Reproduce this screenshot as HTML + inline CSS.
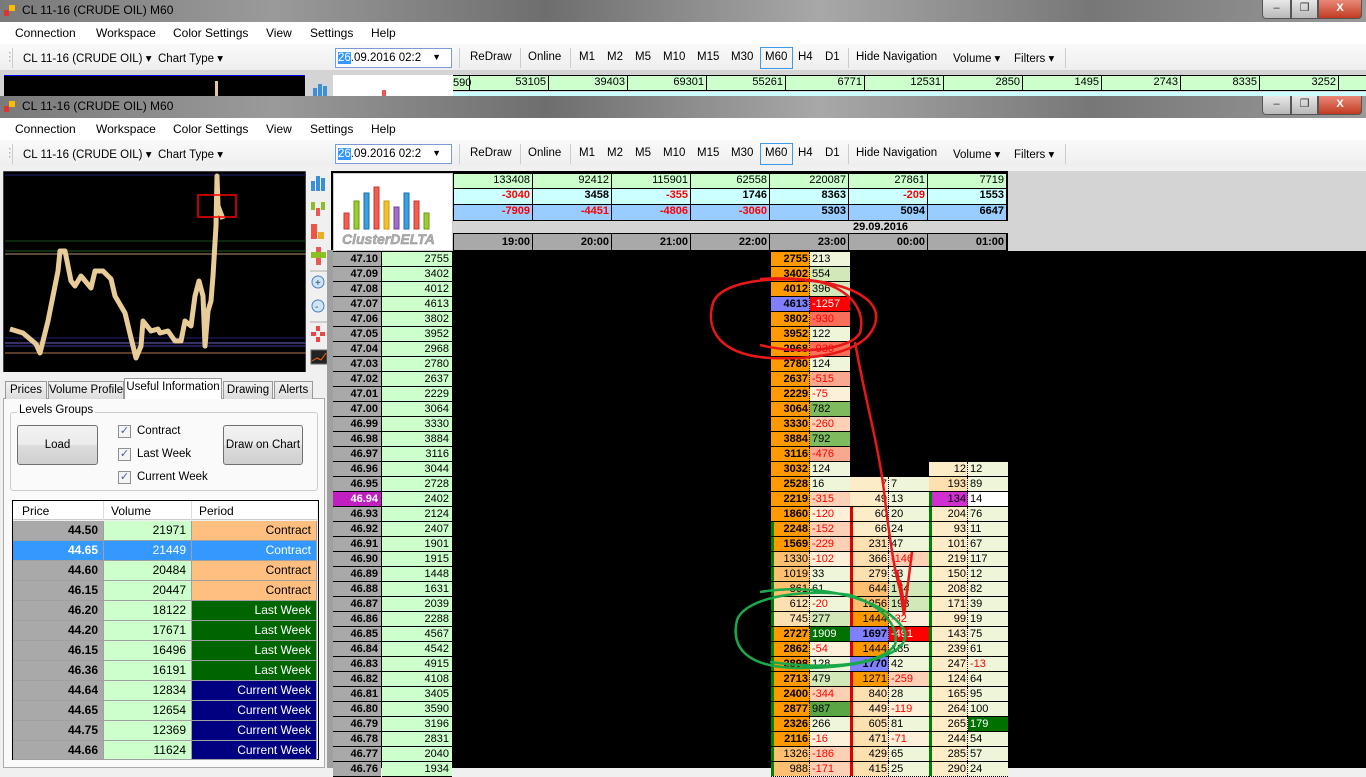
<!DOCTYPE html>
<html><head><meta charset="utf-8"><style>
*{margin:0;padding:0;box-sizing:border-box}
body{width:1366px;height:768px;overflow:hidden;position:relative;background:#f0f0f0;font-family:"Liberation Sans",sans-serif;font-size:12px;color:#000}
.a{position:absolute}
.title{left:0;width:1366px;height:22px;background:linear-gradient(90deg,#7a7a7a,#9a9a9a 20%,#6e6e6e 40%,#a8a8a8 60%,#777 80%,#9a9a9a);color:#000}
.title span{position:absolute;left:22px;top:3px;font-size:12px}
.ticon{position:absolute;left:4px;top:5px;width:12px;height:11px}
.btns{position:absolute;right:4px;top:0;height:19px;display:flex}
.btns div{height:19px;border:1px solid #555;border-top:none;background:linear-gradient(#e8e8e8,#b8b8b8);color:#333;text-align:center;font-size:11px;line-height:17px}
.menu{left:0;width:1366px;height:22px;background:#fff}
.menu span{position:absolute;top:4px;font-size:12px}
.tb{left:0;width:1366px;height:26px;background:linear-gradient(#fafafa,#eeeeee)}
.tb span{position:absolute;top:7px;font-size:11.5px;white-space:nowrap}
.sep{position:absolute;top:4px;width:1px;height:20px;background:#ccc}
.combo{position:absolute;top:4px;left:335px;width:117px;height:20px;border:1px solid #7a9cd3;background:#fff;font-size:11.5px;padding:3px 0 0 2px}
.combo b{background:#3399ff;color:#fff;font-weight:normal}
.m60{position:absolute;top:3px;left:760px;width:33px;height:22px;border:1px solid #3c9ae8}
.col{position:absolute;top:252px}
.col div{height:15px;line-height:14px;font-size:11px;border-bottom:1px solid #000;white-space:nowrap}
.pc div{background:#a9a9a9;font-weight:bold;text-align:right;padding-right:3px;width:48px}
.vc div{background:#ccffcc;text-align:right;padding-right:3px;width:70px}
.cl div{display:flex;border-bottom:1px dotted #000}
.cl i{font-style:normal;display:block;width:39px;text-align:right;padding-right:1px;border-right:1px dotted #000}
.cl u{text-decoration:none;display:block;width:40px;padding-left:2px}
.B{font-weight:bold}
.O{background:#ff9900}.o{background:#fcc070}.p{background:#fde0b0}.q{background:#fdecc8}
.n{color:#f00}
.g1{background:#eef5d8}.g2{background:#d2e8b8}.g3{background:#7dbb5e}.g4{background:#007000;color:#fff}
.r1{background:#fdf0d8}.r2{background:#fcd0b4}.r3{background:#f9a890}.r4{background:#f86e5a}.r5{background:#ff0000;color:#fff}
.bl{background:#8080ff}
.gl{box-shadow:inset 3px 0 0 #008000}.rl{box-shadow:inset 3px 0 0 #e00000}
.hd{position:absolute;left:453px;display:flex}
.hd div{width:79px;text-align:right;padding-right:2px;border-right:1px solid #000;border-bottom:1px solid #000;font-size:11px}
.lt{position:absolute;left:13px;display:flex;height:20px;font-size:12px}
.lt div{line-height:19px;text-align:right;padding-right:5px;border-bottom:1px solid #a0a0a0;border-right:1px solid #a0a0a0}
.lt .p1{width:91px;background:#a9a9a9;font-weight:bold}
.lt .p2{width:88px;background:#ccffcc}
.lt .p3{width:125px}
.tab{position:absolute;top:381px;height:18px;border:1px solid #999;border-bottom:none;background:linear-gradient(#f2f2f2,#dcdcdc);font-size:11.5px;padding-top:2px;text-align:center;white-space:nowrap;overflow:hidden}
.btn{position:absolute;border:1px solid #707070;border-radius:3px;background:linear-gradient(#f2f2f2,#ebebeb 50%,#dddddd 50%,#cfcfcf);text-align:center;font-size:11.5px}
.cb{position:absolute;width:13px;height:13px;border:1px solid #8e8f8f;background:#f4f4f4;font-size:11px;line-height:11px;text-align:center;color:#4a5f97}
</style></head><body>

<!-- Window 1 (behind) -->
<div class="a title" style="top:0"><svg class="ticon" viewBox="0 0 12 11"><rect x="0" y="5" width="5" height="6" fill="#d33"/><rect x="5" y="0" width="6" height="6" fill="#fb0"/></svg><span>CL 11-16 (CRUDE OIL) M60</span>
<div class="btns"><div style="width:29px;border-radius:0 0 0 4px">&#8211;</div><div style="width:27px">&#10064;</div><div style="width:44px;background:linear-gradient(#e88a7a,#c23b22);color:#fff;font-weight:bold;border-radius:0 0 4px 0">X</div></div></div>
<div class="a menu" style="top:22px"><span style="left:15px">Connection</span><span style="left:96px">Workspace</span><span style="left:173px">Color Settings</span><span style="left:266px">View</span><span style="left:310px">Settings</span><span style="left:371px">Help</span></div>
<div class="a tb" style="top:44px">
<span style="left:4px;top:5px;color:#aaa">⋮</span><div class="sep" style="left:12px"></div>
<span style="left:23px">CL 11-16 (CRUDE OIL) ▾</span><span style="left:158px">Chart Type ▾</span>
<div class="combo"><b>26</b>.09.2016 02:2<span style="position:absolute;right:10px;top:3px;font-size:9px">▼</span></div>
<div class="sep" style="left:459px"></div><span style="left:470px">ReDraw</span><div class="sep" style="left:520px"></div><span style="left:528px">Online</span><div class="sep" style="left:570px"></div>
<span style="left:579px">M1</span><span style="left:607px">M2</span><span style="left:635px">M5</span><span style="left:663px">M10</span><span style="left:697px">M15</span><span style="left:731px">M30</span><div class="m60"></div><span style="left:765px">M60</span><span style="left:798px">H4</span><span style="left:825px">D1</span><div class="sep" style="left:848px"></div>
<span style="left:856px">Hide Navigation</span><span style="left:953px">Volume ▾</span><span style="left:1014px">Filters ▾</span><div class="sep" style="left:1065px"></div></div>
<div class="a" style="top:70px;left:0;width:1366px;height:26px;background:#d4d4d4"></div>
<div class="a" style="top:75px;left:4px;width:301px;height:21px;background:#000;border-top:1px solid #00f"></div>
<div class="a" style="top:81px;left:215px;width:3px;height:15px;background:#e8c890"></div>
<div class="a" style="top:75px;left:333px;width:120px;height:21px;background:#fff"></div>
<div class="a" style="top:90px;left:382px;width:4px;height:6px;background:#e55"></div>
<div class="a" style="top:75px;left:453px;width:913px;height:16px;background:#ccffcc;border-top:1px solid #000;border-bottom:1px solid #000;font-size:11px">
<div style="position:absolute;left:0;top:1px;width:16px;text-align:right">590</div>
<div style="position:absolute;left:16px;top:0;display:flex">
<div style="width:79px;border-left:1px solid #000;text-align:right;padding-right:2px;height:14px">53105</div><div style="width:79px;border-left:1px solid #000;text-align:right;padding-right:2px;height:14px">39403</div><div style="width:79px;border-left:1px solid #000;text-align:right;padding-right:2px;height:14px">69301</div><div style="width:79px;border-left:1px solid #000;text-align:right;padding-right:2px;height:14px">55261</div><div style="width:79px;border-left:1px solid #000;text-align:right;padding-right:2px;height:14px">6771</div><div style="width:79px;border-left:1px solid #000;text-align:right;padding-right:2px;height:14px">12531</div><div style="width:79px;border-left:1px solid #000;text-align:right;padding-right:2px;height:14px">2850</div><div style="width:79px;border-left:1px solid #000;text-align:right;padding-right:2px;height:14px">1495</div><div style="width:79px;border-left:1px solid #000;text-align:right;padding-right:2px;height:14px">2743</div><div style="width:79px;border-left:1px solid #000;text-align:right;padding-right:2px;height:14px">8335</div><div style="width:79px;border-left:1px solid #000;text-align:right;padding-right:2px;height:14px">3252</div><div style="width:40px;border-left:1px solid #000;height:14px"></div></div></div>
<div class="a" style="top:92px;left:453px;width:913px;height:4px;background:#ccffff"></div>
<div class="a" style="top:80px;left:312px;width:16px;height:16px"><svg width="16" height="16"><rect x="1" y="8" width="4" height="8" fill="#3a8fd8"/><rect x="6" y="4" width="4" height="12" fill="#3a8fd8"/><rect x="11" y="6" width="4" height="10" fill="#3a8fd8"/></svg></div>

<!-- Window 2 -->
<div class="a title" style="top:96px"><svg class="ticon" viewBox="0 0 12 11"><rect x="0" y="5" width="5" height="6" fill="#d33"/><rect x="5" y="0" width="6" height="6" fill="#fb0"/></svg><span>CL 11-16 (CRUDE OIL) M60</span>
<div class="btns"><div style="width:29px;border-radius:0 0 0 4px">&#8211;</div><div style="width:27px">&#10064;</div><div style="width:44px;background:linear-gradient(#e88a7a,#c23b22);color:#fff;font-weight:bold;border-radius:0 0 4px 0">X</div></div></div>
<div class="a menu" style="top:118px"><span style="left:15px">Connection</span><span style="left:96px">Workspace</span><span style="left:173px">Color Settings</span><span style="left:266px">View</span><span style="left:310px">Settings</span><span style="left:371px">Help</span></div>
<div class="a tb" style="top:140px">
<span style="left:4px;top:5px;color:#aaa">⋮</span><div class="sep" style="left:12px"></div>
<span style="left:23px">CL 11-16 (CRUDE OIL) ▾</span><span style="left:158px">Chart Type ▾</span>
<div class="combo"><b>26</b>.09.2016 02:2<span style="position:absolute;right:10px;top:3px;font-size:9px">▼</span></div>
<div class="sep" style="left:459px"></div><span style="left:470px">ReDraw</span><div class="sep" style="left:520px"></div><span style="left:528px">Online</span><div class="sep" style="left:570px"></div>
<span style="left:579px">M1</span><span style="left:607px">M2</span><span style="left:635px">M5</span><span style="left:663px">M10</span><span style="left:697px">M15</span><span style="left:731px">M30</span><div class="m60"></div><span style="left:765px">M60</span><span style="left:798px">H4</span><span style="left:825px">D1</span><div class="sep" style="left:848px"></div>
<span style="left:856px">Hide Navigation</span><span style="left:953px">Volume ▾</span><span style="left:1014px">Filters ▾</span><div class="sep" style="left:1065px"></div></div>

<!-- chart -->
<svg class="a" style="left:3px;top:171px" width="303" height="202">
<rect x="0" y="0" width="303" height="202" fill="#000" stroke="#888"/>
<line x1="2" y1="4" x2="303" y2="4" stroke="#22227a"/>
<line x1="2" y1="70" x2="303" y2="70" stroke="#1d4d1d"/>
<line x1="2" y1="80" x2="303" y2="80" stroke="#1d5d1d"/>
<line x1="2" y1="83" x2="303" y2="83" stroke="#b89070"/>
<line x1="2" y1="167" x2="303" y2="167" stroke="#22227a"/>
<line x1="2" y1="172" x2="303" y2="172" stroke="#7060c0"/>
<line x1="2" y1="175" x2="303" y2="175" stroke="#4040a0"/>
<line x1="2" y1="182" x2="303" y2="182" stroke="#b07850"/>
<polyline fill="none" stroke="#e8cc98" stroke-width="5" stroke-linejoin="round" points="7,158 20,162 33,173 37,182 45,150 55,100 57,80 62,80 68,110 72,115 78,105 88,117 92,100 100,100 108,108 112,125 122,142 128,167 133,187 138,175 140,150 148,160 155,158 157,162 165,160 172,170 178,170 182,150 188,155 192,125 196,110 200,125 202,175 205,140 208,130 210,105 213,55 214,5 215,35 220,48"/>
<rect x="195" y="24" width="38" height="22" fill="none" stroke="#f00" stroke-width="1.5"/>
</svg>

<!-- tool icons -->
<div class="a" style="left:306px;top:171px;width:25px;height:200px;background:#f0f0f0"></div>
<svg class="a" style="left:310px;top:174px" width="20" height="196">
<g fill="#3a8fd8"><rect x="1" y="7" width="4" height="10"/><rect x="6" y="2" width="4" height="15"/><rect x="11" y="4" width="4" height="13"/></g>
<g><rect x="1" y="28" width="4" height="8" fill="#8cbf26"/><rect x="11" y="28" width="4" height="8" fill="#8cbf26"/><rect x="6" y="34" width="4" height="8" fill="#e55"/></g>
<g><rect x="1" y="50" width="6" height="15" fill="#e54"/><rect x="8" y="58" width="6" height="7" fill="#e8b020"/></g>
<g><rect x="6" y="73" width="5" height="18" fill="#e55"/><rect x="1" y="78" width="15" height="6" fill="#8cbf26"/></g>
<line x1="0" y1="97" x2="20" y2="97" stroke="#aaa"/>
<circle cx="8" cy="108" r="6" fill="#cfe4f7" stroke="#4a7fb8"/><text x="5" y="112" font-size="10" fill="#246">+</text>
<circle cx="8" cy="132" r="6" fill="#cfe4f7" stroke="#4a7fb8"/><text x="5" y="136" font-size="10" fill="#246">-</text>
<line x1="0" y1="148" x2="20" y2="148" stroke="#aaa"/>
<g fill="#e44"><rect x="6" y="152" width="4" height="5"/><rect x="6" y="163" width="4" height="5"/><rect x="1" y="158" width="5" height="4"/><rect x="10" y="158" width="5" height="4"/></g>
<rect x="1" y="176" width="16" height="14" fill="#222" stroke="#666"/><polyline points="2,187 7,184 11,186 16,179" fill="none" stroke="#f60"/>
</svg>

<!-- grid background -->
<div class="a" style="left:331px;top:171px;width:1035px;height:597px;background:#000"></div>
<div class="a" style="left:327px;top:250px;width:6px;height:518px;background:#a0a0a0"></div>
<div class="a" style="left:1008px;top:171px;width:358px;height:80px;background:#d4d4d4"></div>
<div class="a" style="left:453px;top:221px;width:555px;height:12px;background:#d4d4d4"></div>
<div class="a" style="left:333px;top:173px;width:120px;height:78px;background:#fff;border:1px solid #ccc"></div>
<svg class="a" style="left:336px;top:183px" width="116" height="64">
<g stroke-width="1">
<rect x="8" y="30" width="5" height="16" fill="#f06050" stroke="#c33"/>
<rect x="18" y="18" width="5" height="28" fill="#9acd32" stroke="#6a9a12"/>
<rect x="28" y="10" width="5" height="36" fill="#3ca0e0" stroke="#1a70b0"/>
<rect x="38" y="4" width="5" height="42" fill="#f06050" stroke="#c33"/>
<rect x="48" y="18" width="5" height="28" fill="#f0c030" stroke="#c90"/>
<rect x="58" y="24" width="5" height="22" fill="#a070c8" stroke="#7040a0"/>
<rect x="68" y="10" width="5" height="36" fill="#3ca0e0" stroke="#1a70b0"/>
<rect x="78" y="18" width="5" height="28" fill="#f06050" stroke="#c33"/>
<rect x="88" y="30" width="5" height="16" fill="#9acd32" stroke="#6a9a12"/></g>
<text x="6" y="61" font-family="Liberation Sans, sans-serif" font-size="14" font-weight="bold" font-style="italic" fill="#b0b0b0" stroke="#888" stroke-width=".4">ClusterDELTA</text>
</svg>

<!-- header -->
<div class="hd" style="top:173px;height:16px;background:#ccffcc;border-top:1px solid #000;border-left:1px solid #000"><div>133408</div><div>92412</div><div>115901</div><div>62558</div><div>220087</div><div>27861</div><div>7719</div></div>
<div class="hd B" style="top:189px;height:16px;background:#ccffff;border-left:1px solid #000"><div class="n">-3040</div><div>3458</div><div class="n">-355</div><div>1746</div><div>8363</div><div class="n">-209</div><div>1553</div></div>
<div class="hd B" style="top:205px;height:16px;background:#99ccff;border-left:1px solid #000"><div class="n">-7909</div><div class="n">-4451</div><div class="n">-4806</div><div class="n">-3060</div><div>5303</div><div>5094</div><div>6647</div></div>
<div class="a B" style="left:853px;top:221px;font-size:11px">29.09.2016</div>
<div class="hd B" style="top:233px;height:18px;background:#a9a9a9;border-top:1px solid #000;border-left:1px solid #000;line-height:16px"><div>19:00</div><div>20:00</div><div>21:00</div><div>22:00</div><div>23:00</div><div>00:00</div><div>01:00</div></div>

<!-- price column -->
<div class="col pc" style="left:333px"><div>47.10</div><div>47.09</div><div>47.08</div><div>47.07</div><div>47.06</div><div>47.05</div><div>47.04</div><div>47.03</div><div>47.02</div><div>47.01</div><div>47.00</div><div>46.99</div><div>46.98</div><div>46.97</div><div>46.96</div><div>46.95</div><div style="background:#c020c0;color:#fff">46.94</div><div>46.93</div><div>46.92</div><div>46.91</div><div>46.90</div><div>46.89</div><div>46.88</div><div>46.87</div><div>46.86</div><div>46.85</div><div>46.84</div><div>46.83</div><div>46.82</div><div>46.81</div><div>46.80</div><div>46.79</div><div>46.78</div><div>46.77</div><div>46.76</div></div>
<div class="col vc" style="left:382px"><div>2755</div><div>3402</div><div>4012</div><div>4613</div><div>3802</div><div>3952</div><div>2968</div><div>2780</div><div>2637</div><div>2229</div><div>3064</div><div>3330</div><div>3884</div><div>3116</div><div>3044</div><div>2728</div><div>2402</div><div>2124</div><div>2407</div><div>1901</div><div>1915</div><div>1448</div><div>1631</div><div>2039</div><div>2288</div><div>4567</div><div>4542</div><div>4915</div><div>4108</div><div>3405</div><div>3590</div><div>3196</div><div>2831</div><div>2040</div><div>1934</div></div>

<!-- 23:00 -->
<div class="col cl" style="left:771px">
<div><i class="O B">2755</i><u class="g1">213</u></div>
<div><i class="O B">3402</i><u class="g2">554</u></div>
<div><i class="O B">4012</i><u class="g2">396</u></div>
<div><i class="bl B">4613</i><u class="r5">-1257</u></div>
<div><i class="O B">3802</i><u class="r4 n">-930</u></div>
<div><i class="O B">3952</i><u class="g1">122</u></div>
<div><i class="O B">2968</i><u class="r4 n">-930</u></div>
<div><i class="O B">2780</i><u class="g1">124</u></div>
<div><i class="O B">2637</i><u class="r3 n">-515</u></div>
<div><i class="O B">2229</i><u class="r1 n">-75</u></div>
<div><i class="O B">3064</i><u class="g3">782</u></div>
<div><i class="O B">3330</i><u class="r2 n">-260</u></div>
<div><i class="O B">3884</i><u class="g3">792</u></div>
<div><i class="O B">3116</i><u class="r3 n">-476</u></div>
<div><i class="O B">3032</i><u class="g1">124</u></div>
<div><i class="O B">2528</i><u class="g1">16</u></div>
<div><i class="O B">2219</i><u class="r2 n">-315</u></div>
<div><i class="O B">1860</i><u class="r1 n">-120</u></div>
<div><i class="O B gl">2248</i><u class="r2 n">-152</u></div>
<div><i class="O B gl">1569</i><u class="r2 n">-229</u></div>
<div><i class="o gl">1330</i><u class="r1 n">-102</u></div>
<div><i class="o gl">1019</i><u class="g1">33</u></div>
<div><i class="o gl">861</i><u class="g1">61</u></div>
<div><i class="p gl">612</i><u class="g1 n">-20</u></div>
<div><i class="p gl">745</i><u class="g2">277</u></div>
<div><i class="O B gl">2727</i><u class="g4">1909</u></div>
<div><i class="O B gl">2862</i><u class="r1 n">-54</u></div>
<div><i class="O B gl">2898</i><u class="g1">128</u></div>
<div><i class="O B gl">2713</i><u class="g2">479</u></div>
<div><i class="O B gl">2400</i><u class="r2 n">-344</u></div>
<div><i class="O B gl">2877</i><u class="g3" style="background:#5aa645">987</u></div>
<div><i class="O B gl">2326</i><u class="g1">266</u></div>
<div><i class="O B gl">2116</i><u class="r1 n">-16</u></div>
<div><i class="o gl">1326</i><u class="r2 n">-186</u></div>
<div><i class="o gl">988</i><u class="r2 n">-171</u></div>
</div>

<!-- 00:00 -->
<div class="col cl" style="left:850px;top:477px">
<div><i class="q">7</i><u class="g1">7</u></div>
<div><i class="q">49</i><u class="g1">13</u></div>
<div><i class="q rl">60</i><u class="g1">20</u></div>
<div><i class="q rl">66</i><u class="g1">24</u></div>
<div><i class="p rl">231</i><u class="g1">47</u></div>
<div><i class="p rl">366</i><u class="r2 n">-146</u></div>
<div><i class="p rl">279</i><u class="g1">33</u></div>
<div><i class="o rl">644</i><u class="g2">174</u></div>
<div><i class="o rl">1256</i><u class="g2">198</u></div>
<div><i class="O rl">1444</i><u class="r1 n">-32</u></div>
<div><i class="bl B">1697</i><u class="r5">-491</u></div>
<div><i class="O rl">1444</i><u class="g1">185</u></div>
<div><i class="bl B">1770</i><u class="g1">42</u></div>
<div><i class="O rl">1271</i><u class="r2 n">-259</u></div>
<div><i class="p rl">840</i><u class="g1">28</u></div>
<div><i class="p rl">449</i><u class="r1 n">-119</u></div>
<div><i class="p rl">605</i><u class="g1">81</u></div>
<div><i class="p rl">471</i><u class="r1 n">-71</u></div>
<div><i class="p rl">429</i><u class="g1">65</u></div>
<div><i class="p rl">415</i><u class="g1">25</u></div>
</div>

<!-- 01:00 -->
<div class="col cl" style="left:929px;top:462px">
<div><i class="q">12</i><u class="g1">12</u></div>
<div><i class="p">193</i><u class="g1">89</u></div>
<div><i style="background:#d030d0;box-shadow:inset 3px 0 0 #008000">134</i><u style="background:#fff">14</u></div>
<div><i class="q gl">204</i><u class="g1">76</u></div>
<div><i class="q gl">93</i><u class="g1">11</u></div>
<div><i class="q gl">101</i><u class="g1">67</u></div>
<div><i class="q gl">219</i><u class="g1">117</u></div>
<div><i class="q gl">150</i><u class="g1">12</u></div>
<div><i class="q gl">208</i><u class="g1">82</u></div>
<div><i class="q gl">171</i><u class="g1">39</u></div>
<div><i class="q gl">99</i><u class="g1">19</u></div>
<div><i class="q gl">143</i><u class="g1">75</u></div>
<div><i class="q gl">239</i><u class="g1">61</u></div>
<div><i class="q gl">247</i><u class="g1 n">-13</u></div>
<div><i class="q gl">124</i><u class="g1">64</u></div>
<div><i class="q gl">165</i><u class="g1">95</u></div>
<div><i class="q gl">264</i><u class="g1">100</u></div>
<div><i class="q gl">265</i><u class="g4">179</u></div>
<div><i class="q gl">244</i><u class="g1">54</u></div>
<div><i class="q gl">285</i><u class="g1">57</u></div>
<div><i class="q gl">290</i><u class="g1">24</u></div>
</div>

<!-- annotations -->
<svg class="a" style="left:0;top:0" width="1366" height="768">
<path d="M760,279 C820,275 880,290 876,320 C870,352 820,360 770,358 C720,355 705,330 713,303 C720,282 770,275 820,282 C850,290 866,310 860,333 C850,350 800,355 760,345" fill="none" stroke="#e81818" stroke-width="2.5"/>
<path d="M855,342 C865,400 880,450 885,500 C890,540 895,580 905,605" fill="none" stroke="#e81818" stroke-width="2.5"/>
<path d="M897,570 L904,615 L912,552 M900,580 L905,610" fill="none" stroke="#e81818" stroke-width="2.5"/>
<path d="M760,592 C820,582 890,600 905,632 C910,655 860,668 800,668 C750,668 730,650 737,620 C745,598 800,588 850,595 C880,605 900,625 895,645 C880,665 830,670 770,662" fill="none" stroke="#1aa84a" stroke-width="2.5"/>
</svg>

<!-- left panel -->
<div class="a" style="left:0;top:372px;width:327px;height:396px;background:#f0f0f0"></div>
<div class="a" style="left:3px;top:398px;width:322px;height:370px;border:1px solid #aaa;background:#fafafa"></div>
<div class="tab" style="left:5px;width:42px">Prices</div>
<div class="tab" style="left:48px;width:76px">Volume Profile</div>
<div class="tab" style="left:124px;top:378px;height:21px;width:98px;background:#fff;z-index:2">Useful Information</div>
<div class="tab" style="left:223px;width:50px">Drawing</div>
<div class="tab" style="left:274px;width:39px">Alerts</div>
<div class="a" style="left:10px;top:412px;width:308px;height:79px;border:1px solid #ccc;border-radius:3px"></div>
<div class="a" style="left:17px;top:404px;background:#fafafa;padding:0 2px;font-size:11.5px">Levels Groups</div>
<div class="btn" style="left:17px;top:425px;width:81px;height:40px;line-height:38px">Load</div>
<div class="btn" style="left:223px;top:425px;width:80px;height:40px;line-height:38px">Draw on Chart</div>
<div class="cb" style="left:118px;top:425px">✓</div><div class="a" style="left:137px;top:425px;font-size:11.5px">Contract</div>
<div class="cb" style="left:118px;top:448px">✓</div><div class="a" style="left:137px;top:448px;font-size:11.5px">Last Week</div>
<div class="cb" style="left:118px;top:471px">✓</div><div class="a" style="left:137px;top:471px;font-size:11.5px">Current Week</div>
<div class="a" style="left:12px;top:500px;width:307px;height:260px;border:1px solid #000;background:#f0f0f0"></div>
<div class="a" style="left:13px;top:501px;width:304px;height:19px;background:#fff;border-bottom:1px solid #ccc"></div>
<div class="a" style="left:22px;top:504px">Price</div><div class="a" style="left:103px;top:501px;width:1px;height:19px;background:#ddd"></div><div class="a" style="left:111px;top:504px">Volume</div><div class="a" style="left:191px;top:501px;width:1px;height:19px;background:#ddd"></div><div class="a" style="left:199px;top:504px">Period</div>
<div class="lt" style="top:521px"><div class="p1">44.50</div><div class="p2">21971</div><div class="p3" style="background:#ffbf80">Contract</div></div>
<div class="lt" style="top:541px"><div class="p1" style="background:#3399ff;color:#fff">44.65</div><div class="p2" style="background:#3399ff;color:#fff">21449</div><div class="p3" style="background:#3399ff;color:#fff">Contract</div></div>
<div class="lt" style="top:561px"><div class="p1">44.60</div><div class="p2">20484</div><div class="p3" style="background:#ffbf80">Contract</div></div>
<div class="lt" style="top:581px"><div class="p1">46.15</div><div class="p2">20447</div><div class="p3" style="background:#ffbf80">Contract</div></div>
<div class="lt" style="top:601px"><div class="p1">46.20</div><div class="p2">18122</div><div class="p3" style="background:#006400;color:#fff">Last Week</div></div>
<div class="lt" style="top:621px"><div class="p1">44.20</div><div class="p2">17671</div><div class="p3" style="background:#006400;color:#fff">Last Week</div></div>
<div class="lt" style="top:641px"><div class="p1">46.15</div><div class="p2">16496</div><div class="p3" style="background:#006400;color:#fff">Last Week</div></div>
<div class="lt" style="top:661px"><div class="p1">46.36</div><div class="p2">16191</div><div class="p3" style="background:#006400;color:#fff">Last Week</div></div>
<div class="lt" style="top:681px"><div class="p1">44.64</div><div class="p2">12834</div><div class="p3" style="background:#000080;color:#fff">Current Week</div></div>
<div class="lt" style="top:701px"><div class="p1">44.65</div><div class="p2">12654</div><div class="p3" style="background:#000080;color:#fff">Current Week</div></div>
<div class="lt" style="top:721px"><div class="p1">44.75</div><div class="p2">12369</div><div class="p3" style="background:#000080;color:#fff">Current Week</div></div>
<div class="lt" style="top:741px;height:19px"><div class="p1">44.66</div><div class="p2">11624</div><div class="p3" style="background:#000080;color:#fff">Current Week</div></div>
</body></html>
